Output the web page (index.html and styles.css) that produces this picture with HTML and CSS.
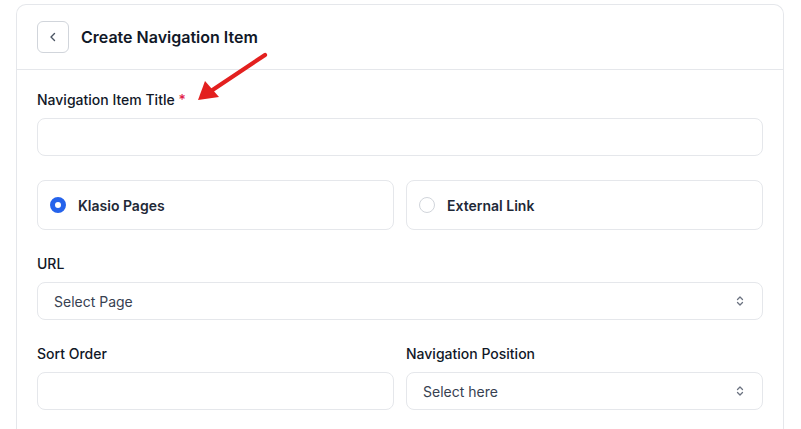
FILE: index.html
```html
<!DOCTYPE html>
<html lang="en">
<head>
<meta charset="utf-8">
<title>Create Navigation Item</title>
<link rel="stylesheet" href="styles.css">
</head>
<body>
<div class="card">
  <div class="card-header">
    <button class="back-btn" type="button" aria-label="Back">
      <svg width="14" height="14" viewBox="0 0 14 14" fill="none"><path d="M8.5 3.5 5 7l3.5 3.5" stroke="#4b5563" stroke-width="1.4" stroke-linecap="round" stroke-linejoin="round"/></svg>
    </button>
    <h1 class="title">Create Navigation Item</h1>
  </div>
  <div class="card-body">
    <div class="field">
      <label class="label">Navigation Item Title <span class="req">*</span></label>
      <div class="input"></div>
    </div>
    <div class="radio-row">
      <div class="radio-card">
        <span class="radio checked"></span>
        <span class="radio-text">Klasio Pages</span>
      </div>
      <div class="radio-card">
        <span class="radio"></span>
        <span class="radio-text">External Link</span>
      </div>
    </div>
    <div class="field">
      <label class="label">URL</label>
      <div class="input select">
        <span class="placeholder">Select Page</span>
        <svg class="updown" width="12" height="14" viewBox="0 0 12 14" fill="none"><path d="M3.5 5.5 6 3l2.5 2.5M3.5 8.5 6 11l2.5-2.5" stroke="#6b7280" stroke-width="1.3" stroke-linecap="round" stroke-linejoin="round"/></svg>
      </div>
    </div>
    <div class="two-col">
      <div class="field">
        <label class="label">Sort Order</label>
        <div class="input"></div>
      </div>
      <div class="field">
        <label class="label">Navigation Position</label>
        <div class="input select">
          <span class="placeholder">Select here</span>
          <svg class="updown" width="12" height="14" viewBox="0 0 12 14" fill="none"><path d="M3.5 5.5 6 3l2.5 2.5M3.5 8.5 6 11l2.5-2.5" stroke="#6b7280" stroke-width="1.3" stroke-linecap="round" stroke-linejoin="round"/></svg>
        </div>
      </div>
    </div>
  </div>
  <svg class="arrow" width="90" height="70" viewBox="0 0 90 70" fill="none">
    <line x1="84" y1="3" x2="30" y2="39" stroke="#e3201f" stroke-width="4.2" stroke-linecap="round"/>
    <polygon points="17,48 24,29 38,45" fill="#e3201f"/>
  </svg>
</div>
</body>
</html>
```
FILE: styles.css
```css
* { box-sizing: border-box; }
html, body { margin: 0; padding: 0; background: #ffffff; }
body {
  font-family: Inter, "Noto Sans", "Liberation Sans", sans-serif;
  color: #111827;
  padding: 4px 17px 0 16px;
}
.card {
  position: relative;
  border: 1px solid #e5e7eb;
  border-bottom: none;
  border-radius: 10px 10px 0 0;
  height: 440px;
  background: #fff;
}
.card-header {
  display: flex;
  align-items: center;
  gap: 12px;
  padding: 16px 20px;
  border-bottom: 1px solid #e5e7eb;
}
.back-btn {
  width: 32px;
  height: 32px;
  border: 1px solid #d1d5db;
  border-radius: 6px;
  background: #fff;
  display: flex;
  align-items: center;
  justify-content: center;
  padding: 0;
}
.title {
  margin: 0;
  font-size: 16px;
  font-weight: 600;
  line-height: 24px;
  color: #111827;
}
.card-body {
  padding: 20px 20px 0 20px;
  display: flex;
  flex-direction: column;
  gap: 24px;
}
.field { display: flex; flex-direction: column; gap: 8px; min-width: 0; }
.label {
  font-size: 14px;
  font-weight: 500;
  line-height: 20px;
  color: #111827;
}
.req { color: #e11d48; }
.input {
  height: 38px;
  border: 1px solid #e5e7eb;
  border-radius: 8px;
  background: #fff;
}
.select {
  display: flex;
  align-items: center;
  justify-content: space-between;
  padding: 0 16px 0 16px;
}
.placeholder { font-size: 14px; color: #374151; }
.updown { display: block; }
.radio-row, .two-col {
  display: grid;
  grid-template-columns: 1fr 1fr;
  gap: 12px;
}
.radio-card {
  height: 50px;
  border: 1px solid #e5e7eb;
  border-radius: 8px;
  display: flex;
  align-items: center;
  gap: 12px;
  padding: 0 12px;
}
.radio {
  width: 16px;
  height: 16px;
  border-radius: 50%;
  border: 1px solid #d1d5db;
  background: #fff;
  flex: none;
}
.radio.checked {
  border: 5px solid #2563eb;
  background: #fff;
}
.radio-text {
  font-size: 14px;
  font-weight: 600;
  color: #1f2937;
}
.arrow {
  position: absolute;
  left: 164px;
  top: 47px;
}
```
